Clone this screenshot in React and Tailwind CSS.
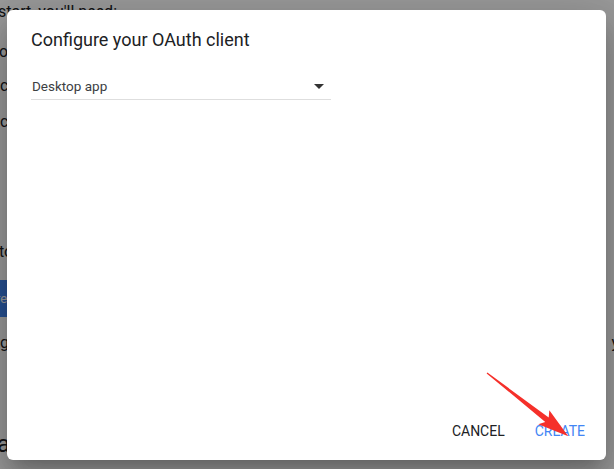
const PageBehind = () => (
  <div className="flex flex-col text-[16px] leading-[24px] text-[#202124] whitespace-nowrap">
    <div className="mt-[0px] ml-[-2px]">start, you'll need:</div>
    <div className="mt-[16px] ml-[-1px]">or a project</div>
    <div className="mt-[10px]">ck the button</div>
    <div className="mt-[12px]">copy the</div>
    <div className="mt-[106px] ml-[-1px]">to enable</div>
    <div className="mt-[16px] ml-[-60px] w-[140px] h-[37px] bg-[#4285f4] rounded-[2px] flex items-center pl-[56px] text-[13px] text-white">
      re
    </div>
    <div className="mt-[14px] flex justify-between">
      <span>g the</span>
      <span className="mr-[-5px]">y</span>
    </div>
    <div className="mt-[73px] text-[24px] leading-[32px] ml-[-3px]">a</div>
  </div>
);

const RedArrow = () => (
  <svg className="absolute inset-0 pointer-events-none" width="614" height="469" viewBox="0 0 614 469">
    <g transform="translate(487 373) rotate(37.9)">
      <polygon points="0,-0.6 76,-2.8 72,-9 103,0 72,9 76,2.8 0,0.6" fill="#f5302a" />
    </g>
  </svg>
);

const Dialog = () => (
  <div className="absolute left-[7px] top-[10px] w-[599px] h-[450px] bg-white rounded-[6px] shadow-[0_11px_15px_-7px_rgba(0,0,0,0.2),0_24px_38px_3px_rgba(0,0,0,0.14),0_9px_46px_8px_rgba(0,0,0,0.12)] flex flex-col">
    <div className="pt-[18px] px-[24px] flex-1">
      <h2 className="text-[18px] leading-[24px] text-[#202124] font-normal">Configure your OAuth client</h2>
      <div className="mt-[24px] w-[300px] border-b border-[#dedede] pb-[3px] flex items-center justify-between">
        <span className="text-[13.5px] leading-[20px] text-[#3c4043] pl-[1px]">Desktop app</span>
        <span className="mr-[7px] w-0 h-0 border-l-[5px] border-r-[5px] border-t-[5px] border-l-transparent border-r-transparent border-t-[#333]" />
      </div>
    </div>
    <div className="flex justify-end items-center gap-[14px] pr-[13px] pb-[11px]">
      <button className="h-[36px] px-[8px] text-[14px] text-[#202124] uppercase">Cancel</button>
      <button className="h-[36px] px-[8px] text-[14px] text-[#4285f4] uppercase">Create</button>
    </div>
  </div>
);

export default function App() {
  return (
    <div className="relative w-[614px] h-[469px] overflow-hidden bg-white" style={{ fontFamily: 'Roboto, "Liberation Sans", sans-serif' }}>
      <PageBehind />
      <div className="absolute inset-0 bg-black/40" />
      <Dialog />
      <RedArrow />
    </div>
  );
}
